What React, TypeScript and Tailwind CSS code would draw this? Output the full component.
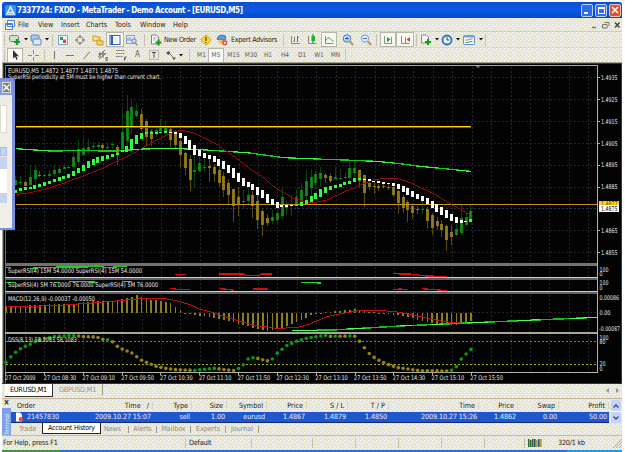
import type { ReactNode } from 'react'

const DITHER =
    "bg-[#e6e5d8] bg-[image:radial-gradient(circle_at_2.5px_2.5px,#ffff9c_0.7px,transparent_0.8px),radial-gradient(circle_at_0.5px_0.5px,#fff_0.7px,transparent_0.8px),radial-gradient(circle_at_2.5px_2.5px,#fff_0.7px,transparent_0.8px)] bg-[size:12px_8px,4px_4px,4px_4px]"

const STEP = 14.53
const barX = (i: number) => 47 + i * STEP

// [up, high, body top, body bottom, low]
const candles = [
    [1, 341, 355, 368, 372], [1, 341, 360, 363, 370], [0, 358, 360, 371, 373], [1, 310, 345, 368, 375],
    [1, 310, 325, 352, 370], [0, 328, 339, 341, 345], [1, 335, 339, 341, 345], [1, 325, 336, 341, 345],
    [1, 310, 325, 336, 345], [1, 308, 320, 332, 335], [1, 310, 315, 322, 325], [1, 310, 314, 319, 322],
    [1, 268, 285, 316, 322], [1, 235, 260, 300, 312], [1, 228, 258, 278, 283], [1, 231, 254, 265, 275],
    [1, 240, 251, 256, 262], [1, 240, 250, 255, 262], [0, 242, 250, 259, 264], [1, 240, 255, 257, 262],
    [1, 240, 245, 250, 262], [0, 250, 254, 273, 308], [1, 140, 210, 262, 272], [1, 98, 148, 238, 265],
    [1, 110, 135, 191, 215], [1, 122, 147, 162, 165], [0, 140, 157, 200, 208], [0, 172, 178, 225, 250],
    [0, 200, 207, 232, 252], [1, 198, 205, 215, 225], [1, 170, 192, 208, 215], [1, 178, 198, 208, 212],
    [0, 195, 200, 234, 256], [0, 205, 212, 248, 258], [0, 222, 236, 280, 316], [0, 270, 272, 318, 340],
    [0, 280, 292, 353, 388], [1, 280, 323, 331, 378], [1, 282, 304, 328, 330], [1, 278, 314, 317, 328],
    [0, 288, 313, 319, 360], [0, 305, 315, 336, 360], [0, 312, 323, 362, 375], [0, 330, 341, 385, 405],
    [0, 350, 363, 398, 425], [0, 380, 380, 432, 480], [0, 375, 405, 430, 462], [1, 385, 417, 420, 440],
    [1, 378, 398, 417, 425], [0, 388, 400, 432, 468], [0, 400, 417, 475, 500], [0, 440, 447, 490, 522],
    [0, 455, 467, 484, 492], [1, 445, 464, 478, 485], [1, 440, 452, 473, 482], [1, 378, 405, 462, 470],
    [1, 418, 428, 438, 460], [1, 400, 428, 432, 462], [1, 380, 405, 430, 433], [1, 362, 383, 425, 432],
    [1, 325, 356, 402, 425], [1, 322, 345, 378, 412], [1, 327, 336, 364, 382], [1, 315, 332, 352, 375],
    [0, 334, 339, 347, 362], [0, 334, 343, 358, 362], [1, 315, 346, 350, 355], [1, 322, 347, 350, 352],
    [1, 330, 345, 349, 352], [1, 300, 318, 347, 360], [1, 298, 317, 332, 345], [0, 323, 325, 356, 376],
    [0, 338, 340, 393, 436], [0, 355, 363, 376, 383], [0, 358, 371, 376, 395], [0, 365, 373, 377, 386],
    [0, 360, 373, 376, 380], [0, 366, 374, 378, 384], [0, 370, 376, 398, 405], [0, 385, 388, 424, 455],
    [0, 400, 405, 437, 452], [0, 415, 420, 444, 480], [0, 425, 432, 454, 470], [0, 432, 440, 444, 455],
    [1, 418, 440, 443, 455], [0, 435, 440, 476, 500], [0, 452, 458, 498, 518], [0, 465, 477, 492, 505],
    [0, 475, 485, 505, 525], [0, 488, 493, 533, 567], [0, 490, 511, 525, 548], [1, 485, 502, 518, 522],
    [1, 430, 468, 512, 518], [1, 450, 465, 490, 495], [1, 428, 447, 480, 480],
]

// [centre, height] of the smoothed bars
const smooth = [
    [389, 10], [384, 9], [381, 9], [378, 7], [375, 10], [370, 10], [366, 10], [361, 10], [356, 10], [351, 10],
    [346, 9], [342, 12], [336, 15], [326, 17], [318, 19], [308, 19], [299, 18], [294, 17], [290, 14], [285, 12],
    [280, 9], [275, 6], [268, 6], [260, 18], [246, 28], [232, 28], [222, 20], [214, 6], [214, 5], [213, 5],
    [212, 5], [210, 5], [211, 4], [214, 7], [221, 17], [234, 25], [249, 30], [264, 28], [274, 18], [280, 16],
    [285, 14], [291, 18], [301, 22], [309, 22], [321, 25], [333, 28], [346, 28], [359, 24], [368, 16], [375, 18],
    [386, 24], [396, 26], [410, 28], [420, 20], [429, 16], [432, 6], [432, 5], [431, 3], [430, 4], [426, 10],
    [420, 14], [411, 18], [402, 20], [393, 22], [384, 16], [379, 13], [374, 9], [370, 9], [366, 9], [361, 10],
    [355, 12], [351, 7], [352, 4], [355, 6], [359, 5], [361, 5], [364, 5], [365, 5], [369, 9], [374, 14],
    [381, 16], [388, 20], [397, 19], [404, 17], [410, 14], [418, 19], [428, 22], [438, 23], [447, 24], [456, 24],
    [467, 22], [474, 18], [478, 10], [478, 4], [475, 8],
]

const macd = [
    [17, 172], [90, 166], [180, 162], [220, 161], [265, 155], [352, 151], [380, 145], [410, 136], [425, 142],
    [454, 150], [483, 152], [512, 160], [541, 181], [556, 188], [570, 191], [599, 198], [630, 200], [660, 209],
    [700, 216], [740, 228], [775, 238], [800, 242], [830, 238], [850, 233], [875, 222], [900, 212], [930, 198],
    [950, 189], [990, 186], [1005, 183], [1035, 181], [1065, 177], [1080, 182], [1110, 186], [1160, 189], [1180, 194],
    [1210, 199], [1250, 208], [1280, 216], [1320, 222], [1350, 227], [1380, 222], [1413, 213],
]

const dss = [
    [17, 338], [30, 323], [45, 308], [60, 297], [75, 289], [90, 283], [105, 275], [134, 266], [163, 260],
    [207, 257], [230, 257], [250, 260], [290, 261], [308, 268], [322, 269], [337, 275], [352, 289], [366, 297],
    [381, 303], [396, 309], [410, 320], [425, 331], [454, 343], [468, 349], [497, 355], [526, 359], [585, 361],
    [640, 355], [660, 357], [700, 362], [715, 356], [730, 344], [744, 327], [758, 323], [773, 325], [800, 333],
    [817, 327], [831, 310], [846, 298], [860, 287], [889, 274], [919, 265], [950, 260], [975, 256], [990, 259],
    [1063, 258], [1078, 273], [1093, 293], [1107, 310], [1122, 322], [1137, 331], [1166, 344], [1195, 353],
    [1230, 358], [1260, 362], [1340, 363], [1355, 361], [1368, 352], [1382, 329], [1397, 313], [1413, 298],
]

const at = (pts: number[][], x: number) => {
    const k = pts.findIndex((p) => p[0] >= x)
    if (k < 0) return pts[pts.length - 1][1]
    if (k === 0) return pts[0][1]
    const [a, b] = [pts[k - 1], pts[k]]
    return a[1] + ((b[1] - a[1]) * (x - a[0])) / (b[0] - a[0])
}

const dssUp = (x: number) =>
    x < 228 || (x > 315 && x < 330) || (x > 577 && x < 648) || (x > 708 && x < 766) || (x > 810 && x < 982) ||
    (x > 999 && x < 1012) || (x > 1043 && x < 1056) || x > 1348

const indicatorBars = Array.from({ length: 97 }, (_, i) => barX(i - 2))
const gridX = Array.from({ length: 30 }, (_, i) => 25 + i * 19.42)
const prices = ['1.4935', '1.4925', '1.4915', '1.4905', '1.4895', '1.4885', '', '1.4865', '1.4855']
const times = ['2009', '08:30', '09:10', '09:50', '10:30', '11:10', '11:50', '12:30', '13:10', '13:50', '14:30', '15:10', '15:50']

const Label = ({ x, y, w, children, fill = '#e4e4e4' }: { x: number; y: number; w: number; children: string; fill?: string }) => (
    <text x={x} y={y} textLength={w} lengthAdjust="spacingAndGlyphs" fill={fill}>{children}</text>
)

const Chart = () => (
    <svg
        className="block w-[620px] h-[321px] shrink-0 overflow-visible whitespace-pre font-['DejaVu_Sans_Condensed','DejaVu_Sans',sans-serif] text-[6.4px]"
        viewBox="2 62 620 321"
        shapeRendering="crispEdges"
    >
        <rect x="2" y="62" width="620" height="321" fill="#a5a596" />
        <rect x="3" y="63" width="619" height="320" fill="#3a3a36" />
        <rect x="4" y="64" width="617" height="319" fill="#040304" />
        <path d="M5 65.5H597.5" stroke="#a8a8a0" />
        <path d="M5.5 65V383" stroke="#6b6b68" />

        <g strokeWidth="1" strokeDasharray="2 2">
            {gridX.map((x) => <path key={x} d={`M${Math.round(x) + 0.5} 67V372`} stroke="#22262f" />)}
            {prices.map((_, i) => <path key={i} d={`M6 ${Math.round(77 + i * 21.9) + 0.5}H597`} stroke="#1c2330" />)}
            <path d="M6 208.5H597" stroke="#23364f" />
            <path d="M6 312.5H597" stroke="#24241c" />
        </g>

        <g transform="translate(0 62) scale(.33333)" fill="none">
            {candles.map(([up, high, top, bottom, low], i) => (
                <g key={i} fill={up ? '#0b7d12' : '#8a7411'}>
                    <rect x={barX(i) - 1.5} y={high} width="3" height={low - high} fill={up ? '#07450b' : '#584b0b'} />
                    <rect x={barX(i) - 4.5} y={top} width="9" height={Math.max(3, bottom - top)} />
                    <path d={`M${barX(i)} ${top}V${bottom}`} stroke={up ? '#119c1b' : '#9b821b'} strokeWidth="3" strokeDasharray="3 3" />
                </g>
            ))}
            <path d="M47 193H1413" stroke="#ffd400" strokeWidth="4" />
            <path d="M47 196.5H1413" stroke="#6e6200" strokeWidth="3" />
            <path d="M47 427H1791" stroke="#c79325" strokeWidth="3" />
            <path
                d="M47 260 150 267 230 266 350 267 430 261 520 259 600 263 650 266 750 273 850 287 950 291 1060 295 1130 298 1200 305 1260 313 1413 328"
                stroke="#12c91c" strokeWidth="4"
            />
            <path
                d="M47 260 150 267M390 263 430 261 520 259 600 263 640 265M700 269 750 273M850 287 950 291M1100 297 1180 302M1250 312 1310 318M1370 325 1413 328"
                stroke="#3cf545" strokeWidth="3"
            />
            <path
                d="M47 398 90 392 134 382 190 364 250 342 300 322 350 297 390 280 430 256 480 230 520 210 545 205 580 212 600 222 650 247 700 282 750 320 790 347 830 380 880 408 920 420 940 422 980 414 1030 391 1080 370 1120 353 1160 349 1190 349 1230 362 1300 395 1350 425 1410 458"
                stroke="#9b0a0a" strokeWidth="3"
            />
            {smooth.map(([c, h], i) => (
                <rect
                    key={i} x={barX(i) - 4.8} y={c - h / 2} width="9" height={Math.max(h, 3)}
                    fill={i < 32 || (i > 57 && i < 72) || i === 94 ? '#2dff3a' : '#ffffff'}
                />
            ))}
            <path d="M1427 12H1441L1434 19Z" fill="#59616d" />
        </g>

        <rect x="5" y="263" width="593" height="3" fill="#727272" />
        <rect x="5" y="277" width="593" height="1" fill="#d0d0c8" />
        <rect x="5" y="278" width="593" height="2" fill="#5b6064" />
        <rect x="5" y="291" width="593" height="1" fill="#d0d0c8" />
        <rect x="5" y="292" width="593" height="2" fill="#5b6064" />
        <rect x="5" y="332" width="593" height="2" fill="#aaa89a" />
        <path d="M5 372.5H598M597.5 65V373" stroke="#b4b2a6" fill="none" />

        <g transform="translate(0 250) scale(.33333)" fill="none" strokeWidth="4">
            {indicatorBars.map((x) => {
                const y = at(macd, x)
                return <rect key={x} x={x - 2.5} y={Math.min(188, y)} width="5" height={Math.max(3, Math.abs(y - 188))} fill="#8d7f1d" />
            })}
            <path
                d="M17 170 100 169 200 165 300 157 360 152 430 145 490 145 520 150 570 164 600 178 640 188 700 208 760 225 830 235 890 233 930 222 980 200 1020 192 1070 183 1120 181 1180 184 1220 191 1280 203 1330 215 1370 218 1413 222"
                stroke="#c40f12" strokeWidth="3"
            />
            <path d="M875 242 1000 240 1200 228 1400 219 1791 202" stroke="#12bd1b" strokeWidth="4.5" />
            <path d="M875 242 955 241M1045 237 1095 234M1200 228 1235 227M1290 224 1330 222M1400 219 1465 216M1550 212 1620 209M1710 206 1791 202" stroke="#4dff55" strokeWidth="3" />
            <path d="M17 276H1791" stroke="#7f8a16" strokeWidth="3" strokeDasharray="7 5" />
            <path d="M17 343H1791" stroke="#a3b015" strokeWidth="3" strokeDasharray="7 5" />
            <g shapeRendering="auto">
                {indicatorBars.map((x) => (
                    <circle key={x} cx={x} cy={at(dss, x)} r="5.4" fill={dssUp(x) ? '#0b9a17' : '#95821a'} />
                ))}
            </g>
            <path d="M17 53H33M90 55 140 52 200 51 260 51 290 48 320 53 382 48" stroke="#18cf22" />
            <path d="M17 97H47M162 97H178M207 94H235L295 97M365 95 396 94M903 97 940 98 962 99" stroke="#1fd52a" />
            <path d="M526 73H557M658 72H730L740 77H775L785 72H817M1180 71 1250 73 1262 77 1340 80" stroke="#e00b0b" />
            <path d="M510 115 540 119H570M657 116 685 118 702 121M760 117H805M1180 119 1200 117 1223 119M1267 116 1340 122" stroke="#d00b0b" />
        </g>

        <Label x={8} y={72.6} w={110}>EURUSD,M5  1.4872 1.4877 1.4871 1.4875</Label>
        <Label x={8} y={79} w={153}>SuperRSI periodicity at 5M must be higher than current chart.</Label>
        <Label x={8} y={273.4} w={134}>SuperRSI(4) 15M 54.0000   SuperRSI(4) 15M 54.0000</Label>
        <Label x={8} y={287.3} w={150}>SuperRSI(4) 5M 76.0000 76.0000   SuperRSI(4) 5M 76.0000</Label>
        <Label x={8} y={301.4} w={87}>MACD(12,26,9) -0.00037 -0.00050</Label>
        <Label x={8} y={342} w={69}>DSS(8,13) 58.1083 58.1083</Label>

        {times.map((t, i) => (
            <g key={t}>
                <path d={`M${Math.round(5 + i * 38.84) + 0.5} 373V375`} stroke="#b4b2a6" />
                <Label x={5 + i * 38.78} y={380.2} w={i ? 32.5 : 30.5}>{`27 Oct ${t}`}</Label>
            </g>
        ))}
        {prices.map((p, i) => p && (
            <g key={p}>
                <path d={`M598 ${Math.round(77 + i * 21.9) + 0.5}H599.5`} stroke="#b4b2a6" />
                <Label x={601} y={79.8 + i * 21.9} w={16.5}>{p}</Label>
            </g>
        ))}
        <rect x="599" y="201" width="20" height="5" fill="#ffd21c" />
        <Label x={601} y={206} w={16.5} fill="#5a4500">1.4877</Label>
        <rect x="599" y="205" width="20" height="7" fill="#fff" />
        <Label x={601} y={210.9} w={16.5} fill="#111">1.4875</Label>
        <Label x={599.5} y={271.6} w={9}>100</Label>
        <Label x={599.5} y={276.4} w={3}>0</Label>
        <Label x={599.5} y={285.4} w={9}>100</Label>
        <Label x={599.5} y={290.2} w={3}>0</Label>
        <Label x={599.5} y={299.8} w={19.5}>0.00086</Label>
        <Label x={599.5} y={314.8} w={11}>0.00</Label>
        <Label x={599} y={330.6} w={21}>-0.00087</Label>
        <Label x={599.5} y={339.6} w={9}>100</Label>
        <Label x={599.5} y={344.4} w={6}>80</Label>
        <Label x={599.5} y={366} w={6}>20</Label>
        <Label x={599.5} y={370.8} w={3}>0</Label>
    </svg>
)

const Icon = ({ children }: { children: ReactNode }) => (
    <svg viewBox="0 0 12 12" className="w-3 h-3 shrink-0" fill="none">{children}</svg>
)

const Cell = ({ w, on, children }: { w: string; on?: boolean; children?: ReactNode }) => (
    <div className={`${w} h-[15px] shrink-0 flex items-center justify-center whitespace-nowrap ${on ? 'bg-[#f8f8f3] border border-[#b9b7aa]' : ''}`}>
        {children}
    </div>
)

const Sep = ({ w }: { w: string }) => (
    <div className={`${w} shrink-0 flex justify-center`}><div className="w-px h-3 bg-[#c9c3ae]" /></div>
)

const Arrow = ({ w }: { w: string }) => (
    <div className={`${w} shrink-0 flex justify-center`}>
        <svg viewBox="0 0 4 3" className="w-1 h-[3px]"><path d="M0 0H4L2 2.6Z" fill="#111" /></svg>
    </div>
)

const Plus = ({ x, y }: { x: number; y: number }) => (
    <path d={`M${x} ${y - 3}V${y + 3}M${x - 3} ${y}H${x + 3}`} stroke="#1b9a24" strokeWidth="2.2" />
)

const MainToolbar = () => (
    <div className="h-4 flex items-center border-t border-[#cfccbb]">
        <Sep w="w-[5px]" />
        <Cell w="w-4"><Icon><rect x="0.5" y="1.5" width="9" height="6" rx="1" fill="#cfe0cf" stroke="#6f8f7c" /><Plus x={8} y={8} /></Icon></Cell>
        <Arrow w="w-[5px]" />
        <Cell w="w-4"><Icon><rect x="1" y="1" width="8" height="6" rx="1" fill="#a9c9ee" stroke="#5f87b8" /><rect x="3" y="5" width="8" height="6" rx="1" fill="#dbe8f5" stroke="#5f87b8" /></Icon></Cell>
        <Arrow w="w-[5px]" />
        <Sep w="w-[7px]" />
        <Cell w="w-3.5"><Icon><rect x="1.5" y="1.5" width="9" height="9" fill="#eef6fb" stroke="#7fa6c8" /><path d="M3 3H6V6H3Z" fill="#25a43a" /><path d="M6 5.5H9V9H6Z" fill="#e0462c" /></Icon></Cell>
        <Cell w="w-5"><Icon><circle cx="6" cy="6" r="3.3" stroke="#8d8b80" /><path d="M6 1V4M6 8V11M1 6H4M8 6H11" stroke="#6a685e" /></Icon></Cell>
        <Cell w="w-4"><Icon><path d="M1 2H4L5 3H8V7H1Z" fill="#ffe27a" stroke="#c79a24" /><path d="M5 6H7L8 7H11V11H5Z" fill="#ffd34e" stroke="#c79a24" /></Icon></Cell>
        <Cell w="w-[18px]" on><Icon><rect x="1" y="1.5" width="10" height="9" fill="#fff" stroke="#2c62b8" /><path d="M3 1V11" stroke="#2c62b8" strokeWidth="2" /><path d="M6 4H9M6 6H9M6 8H9" stroke="#d3d9e6" /></Icon></Cell>
        <Cell w="w-4"><Icon><rect x="0.5" y="1.5" width="8" height="8" fill="#e2ebf3" stroke="#8ea6bd" /><path d="M2 7V4M4 7V3M6 7V5" stroke="#6a8db2" /><circle cx="8" cy="7" r="2.2" fill="#cfe3f6" stroke="#5e86b5" /><path d="M9.5 9 11.5 11.5" stroke="#c39a3a" strokeWidth="1.5" /></Icon></Cell>
        <Sep w="w-2" />
        <Cell w="w-4"><Icon><path d="M1.5 1H6.5L8.5 3V10H1.5Z" fill="#fff" stroke="#77837a" /><path d="M3 4H7M3 6H6" stroke="#9aa39c" /><Plus x={8.5} y={8.5} /></Icon></Cell>
        <div className="w-[34px] shrink-0 whitespace-nowrap tracking-[-0.3px]">New Order</div>
        <Cell w="w-[15px]"><Icon><path d="M6 0.7 11.3 6 6 11.3 0.7 6Z" fill="#ffd735" stroke="#cf9a12" /><path d="M6 3V7M6 8V9" stroke="#4f3a00" strokeWidth="1.2" /></Icon></Cell>
        <Cell w="w-[18px]"><Icon><path d="M1 5Q2 1 6 1T10 4L9 6H2Z" fill="#5b9fdb" stroke="#3c77b5" /><path d="M2 6H7V9Q4 11 2 8Z" fill="#efc56a" /><circle cx="8.7" cy="8.7" r="2.6" fill="#e34f2c" /><rect x="7.8" y="7.8" width="2" height="2" fill="#fff" /></Icon></Cell>
        <div className="w-[49px] shrink-0 whitespace-nowrap tracking-[-0.3px]">Expert Advisors</div>
        <Sep w="w-[7px]" />
        <Cell w="w-4"><Icon><path d="M2.5 2V9.5H10.5M5.5 3V8M5.5 7H4M8.5 3H10" stroke="#7c8f7e" /><path d="M8.5 2V8" stroke="#219e32" /></Icon></Cell>
        <Cell w="w-[18px]"><Icon><path d="M2.5 2V9.5H10.5" stroke="#7c8f7e" /><path d="M7 0V9" stroke="#167a22" /><rect x="5.5" y="2" width="3.5" height="5" fill="#23b135" /></Icon></Cell>
        <Cell w="w-4" on><Icon><path d="M2.5 2V9.5H10.5" stroke="#7c8f7e" /><path d="M2.5 7Q5 2 7 4.5T10.5 7" stroke="#38a548" /></Icon></Cell>
        <Cell w="w-[22px]"><Icon><circle cx="5" cy="4.5" r="3.7" fill="#d5e8fa" stroke="#3474bd" /><path d="M3 4.5H7M5 2.5V6.5" stroke="#1f5fae" /><path d="M8 7.5 11 11" stroke="#c7982f" strokeWidth="2" /></Icon></Cell>
        <Cell w="w-3.5"><Icon><circle cx="5" cy="4.5" r="3.7" fill="#dcebf9" stroke="#6f9fcf" /><path d="M3 4.5H7" stroke="#3a72b5" /><path d="M8 7.5 11 11" stroke="#c7982f" strokeWidth="2" /></Icon></Cell>
        <Sep w="w-[7px]" />
        <Cell w="w-4" on><Icon><path d="M2.5 2V9.5H10.5M9.5 3V9" stroke="#8b9489" /><path d="M5 3 8.5 5.5 5 8Z" fill="#1c9c2c" /></Icon></Cell>
        <Cell w="w-[18px]" on><Icon><path d="M2.5 2V9.5H10.5M6.5 3V9" stroke="#7d90a5" /><path d="M11 3 7.5 5.5 11 8Z" fill="#d9432b" /></Icon></Cell>
        <Sep w="w-1" />
        <Cell w="w-4"><Icon><path d="M1.5 1H6.5L8.5 3V9H1.5Z" fill="#f5f5ef" stroke="#8a8f87" /><Plus x={8} y={8} /></Icon></Cell>
        <Arrow w="w-[5px]" />
        <Cell w="w-4"><Icon><circle cx="6" cy="6" r="4.5" fill="#eaf3fd" stroke="#2f6fc4" strokeWidth="1.8" /><path d="M6 3V6H8.2" stroke="#345" /></Icon></Cell>
        <Arrow w="w-[5px]" />
        <Cell w="w-[18px]"><Icon><rect x="0.5" y="1.5" width="11" height="9" rx="1" fill="#f3f8fc" stroke="#5f93c8" /><path d="M1 2.5H11" stroke="#6ea6de" strokeWidth="2" /><path d="M2.5 6H5L7 5H9.5" stroke="#d56a4a" /><path d="M2.5 8.5H5L7 7.5H9.5" stroke="#4aa55a" /></Icon></Cell>
        <Arrow w="w-[5px]" />
        <Sep w="w-1" />
    </div>
)

const LineToolbar = () => (
    <div className="h-[15px] flex items-center text-[#5c5a52] text-[6.5px] border-t border-[#dad7c8]">
        <Sep w="w-[5px]" />
        <Cell w="w-4" on><Icon><path d="M4 1V9.5L6 7.7 7.5 11 8.7 10.3 7.3 7.2H10Z" fill="#333" /></Icon></Cell>
        <Cell w="w-5"><Icon><path d="M6.5 1V5M6.5 8V12M1 6.5H5M8 6.5H12" stroke="#8b897f" /></Icon></Cell>
        <Sep w="w-[2px]" />
        <Cell w="w-[17px]"><Icon><path d="M6.5 2V10" stroke="#77756b" /></Icon></Cell>
        <Cell w="w-4"><Icon><path d="M2 6.5H10" stroke="#77756b" /></Icon></Cell>
        <Cell w="w-[17px]"><Icon><path d="M2.5 10 9 2.5" stroke="#77756b" /></Icon></Cell>
        <Cell w="w-4"><Icon><path d="M1 8 8 1M2 10 9 4M1 5H9M3 3V9M6 2V9M9 8.5H11M9 8.5V11.5H11M9 10H11" stroke="#605e55" strokeWidth=".8" /></Icon></Cell>
        <Cell w="w-[19px]"><Icon><path d="M1 1.5H10M1 4.5H10M1 7.5H8" stroke="#77756b" strokeDasharray="1.5 .7" /><path d="M9.5 11.5V8H11.5M9.5 9.8H11" stroke="#605e55" /></Icon></Cell>
        <Cell w="w-[15px]"><span className="text-[8px]">A</span></Cell>
        <Cell w="w-[18px]"><Icon><rect x="1.5" y="1.5" width="9" height="9" stroke="#8a887e" strokeDasharray="1 1" /><path d="M4 3.5H8M6 3.5V9" stroke="#55534b" /></Icon></Cell>
        <Cell w="w-[15px]"><Icon><path d="M1 4 3.5 2 5.5 4 3.5 6Z" fill="#55534b" /><path d="M5 5 8 8" stroke="#77756b" /><path d="M7 8.5H11L9 11Z" fill="#4a4942" /></Icon></Cell>
        <Arrow w="w-[5px]" />
        <Sep w="w-3" />
        <Cell w="w-[13px]">M1</Cell>
        <Cell w="w-4" on>M5</Cell>
        <Cell w="w-[19px]">M15</Cell>
        <Cell w="w-4">M30</Cell>
        <Cell w="w-[18px]">H1</Cell>
        <Cell w="w-4">H4</Cell>
        <Cell w="w-[18px]">D1</Cell>
        <Cell w="w-4">W1</Cell>
        <Cell w="w-[17px]">MN</Cell>
        <Sep w="w-[2px]" />
    </div>
)

const TitleBar = () => (
    <div className="h-4 flex items-center bg-gradient-to-b from-[#0a4fd0] via-[#0d59e4] to-[#0748c4] pl-[3px] pr-px rounded-t-[3px]">
        <svg viewBox="0 0 12 12" className="w-[11px] h-[11px]">
            <rect width="12" height="12" rx="2" fill="#3c93e6" />
            <path d="M2 10 6 2 10 10ZM4 8H8" fill="none" stroke="#e9f5ff" strokeWidth="1.5" />
        </svg>
        <div className="pl-px text-white font-bold text-[8px] flex-1">
            <svg className="block w-[300px] h-3 overflow-visible" viewBox="0 0 300 12">
                <text x="0" y="9" textLength="226" fill="#fff">7337724: FXDD - MetaTrader - Demo Account - [EURUSD,M5]</text>
            </svg>
        </div>
        <div className="flex gap-[2px]">
            <div className="w-3 h-[13px] rounded-[2px] border border-[#b9d0f8] bg-[#2f6bea] flex items-end pl-[2px] pb-[2px]"><div className="w-1 h-[2px] bg-white" /></div>
            <div className="w-3 h-[13px] rounded-[2px] border border-[#b9d0f8] bg-[#2f6bea] flex items-center justify-center"><div className="w-[7px] h-[7px] border border-t-2 border-white" /></div>
            <div className="w-3 h-[13px] rounded-[2px] border border-[#f1c5b8] bg-[#e0532c] flex items-center justify-center">
                <svg viewBox="0 0 8 8" className="w-2 h-2"><path d="M1 1 7 7M7 1 1 7" stroke="#fff" strokeWidth="1.6" /></svg>
            </div>
        </div>
    </div>
)

const MenuBar = () => (
    <div className="h-[13px] flex items-center pl-[3px] pr-px">
        <svg viewBox="0 0 10 10" className="w-[10px] h-[10px]"><path d="M2.5.5H9.5V6.5H2.5ZM.5 3.5H7.5V9.5H.5Z" fill="#eef5ff" stroke="#4a83cf" /><path d="M1 4.5H7" stroke="#4a83cf" /></svg>
        <div className="w-[3px]" />
        <div className="w-5">File</div>
        <div className="w-[23px]">View</div>
        <div className="w-[25px]">Insert</div>
        <div className="w-[29px]">Charts</div>
        <div className="w-[25px]">Tools</div>
        <div className="w-[33px]">Window</div>
        <div className="flex-1">Help</div>
        <svg viewBox="0 0 30 8" className="w-[30px] h-2" fill="none" stroke="#77766c">
            <path d="M1 6.5H5" strokeWidth="1.4" />
            <path d="M13.5 1.5H18V5M11.5 3.5H16V7H11.5Z" />
            <path d="M24 1.5 28.5 6.5M28.5 1.5 24 6.5" stroke="#44433c" strokeWidth="1.4" />
        </svg>
    </div>
)

const columns = ['Order', 'Time   /', 'Type', 'Size', 'Symbol', 'Price', 'S / L', 'T / P', 'Time', 'Price', 'Swap', 'Profit']
const trade = ['21457830', '2009.10.27 15:07', 'sell', '1.00', 'eurusd', '1.4867', '1.4879', '1.4850', '2009.10.27 15:26', '1.4862', '0.00', '50.00']
const COLS = 'grid grid-cols-[69px_73px_39px_35px_40px_40px_41px_41px_90px_39px_41px_50px] items-center'

const Terminal = () => (
    <div className="h-[37px] flex border-t border-[#c4b79c]">
        <div className="w-[9px] shrink-0 flex flex-col items-center">
            <div className="h-[9px] leading-[8px] text-[8px] font-bold">×</div>
            <div className="w-[9px] h-[27px] bg-[#7ba2e6] text-[#dce8ff] text-[6px] leading-[9px] whitespace-nowrap tracking-[-0.2px] [writing-mode:vertical-rl] rotate-180">Terminal</div>
        </div>
        <div className="w-[598px] shrink-0">
            <div className={`${COLS} h-[13px]`}>
                {columns.map((c, i) => (
                    <div key={i} className={`whitespace-pre ${i ? 'text-right pr-[3px] border-r border-[#d8d3c2]' : 'pl-[6px]'}`}>{c}</div>
                ))}
            </div>
            <div className={`${COLS} h-[11px] bg-[#1f58cd] border-b border-[#102a78] text-[#e3ecff]`}>
                {trade.map((t, i) => (
                    <div key={i} className={`whitespace-nowrap tracking-[-0.1px] ${i ? 'text-right pr-[2px]' : 'flex items-center pl-[3px] gap-[3px]'}`}>
                        {i === 0 && <svg viewBox="0 0 10 10" className="w-[10px] h-[10px]"><path d="M2 .5H6L8 2.5V9.5H2Z" fill="#fff" /><circle cx="7" cy="7.3" r="2.2" fill="#e1502c" /></svg>}
                        {t}
                    </div>
                ))}
            </div>
            <div className="h-3 flex items-center text-[#8c8a7e] text-[7px]">
                <div className="w-[31px] pl-[2px] text-center">Trade</div>
                <div className="w-[59px] h-[11px] -mt-px flex items-center justify-center whitespace-nowrap bg-white text-black border border-t-0 border-[#222] tracking-[-0.2px]">Account History</div>
                <div className="w-[28px] pr-1 text-center border-r border-[#9f9d90] leading-[7px]">News</div>
                <div className="w-7 text-center border-r border-[#9f9d90] leading-[7px]">Alerts</div>
                <div className="w-[34px] text-center border-r border-[#9f9d90] leading-[7px]">Mailbox</div>
                <div className="w-[35px] text-center border-r border-[#9f9d90] leading-[7px]">Experts</div>
                <div className="w-[33px] text-center border-r border-[#9f9d90] leading-[7px]">Journal</div>
            </div>
        </div>
        <div className="w-[10px] h-6 flex flex-col mt-px ml-[2px]">
            <div className="h-[11px] rounded-[2px] bg-[#c3d3fb] flex items-center justify-center"><svg viewBox="0 0 6 4" className="w-[6px] h-1"><path d="M.5 3.5 3 1 5.5 3.5" fill="none" stroke="#334a80" strokeWidth="1.4" /></svg></div>
            <div className="h-px bg-white" />
            <div className="h-[11px] rounded-[2px] bg-[#c3d3fb] flex items-center justify-center"><svg viewBox="0 0 6 4" className="w-[6px] h-1"><path d="M.5 .5 3 3 5.5 .5" fill="none" stroke="#334a80" strokeWidth="1.4" /></svg></div>
        </div>
    </div>
)

const StatusBar = () => (
    <div className="h-[15px] flex items-center border-t border-[#c4b79c] tracking-[-0.2px]">
        <div className="w-[184px] pl-px border-r border-[#cdbfa3] leading-[10px]">For Help, press F1</div>
        <div className="w-[66px] pl-[3px] border-r border-[#cdbfa3] leading-[10px]">Default</div>
        <div className="w-[61px] h-[10px] border-r border-[#cdbfa3]" />
        <div className="w-[43px] h-[10px] border-r border-[#cdbfa3]" />
        <div className="w-[43px] h-[10px] border-r border-[#cdbfa3]" />
        <div className="w-[43px] h-[10px] border-r border-[#cdbfa3]" />
        <div className="w-[43px] h-[10px] border-r border-[#cdbfa3]" />
        <div className="w-[40px] h-[10px] border-r border-[#cdbfa3]" />
        <svg viewBox="0 0 14 8" className="w-[14px] h-2 ml-[3px]">
            {[0, 2, 4, 6, 8, 10, 12].map((x, i) => (
                <rect key={x} x={x} y={i % 3 === 1 ? 1 : 0} width="1.6" height="8" fill={i < 3 ? '#2f6b38' : i % 2 ? '#23507c' : '#a89c2c'} />
            ))}
        </svg>
        <div className="w-[59px] text-center">320/1 kb</div>
        <div className="flex-1 flex justify-end">
            <svg viewBox="0 0 9 9" className="w-[9px] h-[9px]"><path d="M0 9 9 0M3 9 9 3M6 9 9 6" stroke="#b3af9f" /></svg>
        </div>
    </div>
)

// docked window sticking out over the left edge of the chart
const SidePanel = () => (
    <div className="absolute left-0 top-[78px] w-[15px] h-[152px] rounded-tr-[4px] border-t-[3px] border-r-[3px] border-b-2 border-[#7b90df] bg-[#f0efe6] overflow-hidden">
        <div className="h-[14px] bg-[#8599e2] pl-[2px] pt-px">
            <div className="w-[9px] h-[11px] bg-[#7d7d78] border border-[#dcdcd8] flex items-center justify-center">
                <svg viewBox="0 0 6 6" className="w-[7px] h-[7px]"><path d="M.5 .5 5.5 5.5M5.5 .5 .5 5.5" stroke="#fff" strokeWidth="1.3" /></svg>
            </div>
        </div>
        <div className="h-[10px] bg-[#eeede3]" />
        <div className="w-[7px] h-[28px] bg-white border border-[#dfddd0]" />
        <div className="h-[14px]" />
        <div className="w-[7px] h-[9px] bg-[#c6d4f2] border border-[#a9bdea]" />
        <div className="w-[7px] h-3 mt-px bg-[#c6d4f2]" />
        <div className="w-[7px] h-[24px] bg-white" />
        <div className="w-[7px] h-[10px] bg-[#c6d4f2]" />
    </div>
)

const App = () => {
    return (
        <div className="relative w-[625px] h-[452px] overflow-hidden bg-white text-[#1c1c1c] text-[7.2px] leading-none font-['DejaVu_Sans_Condensed','DejaVu_Sans',sans-serif]">
            <div className={`w-[620px] h-[450px] ml-[2px] mt-[2px] flex flex-col overflow-hidden ${DITHER}`}>
                <TitleBar />
                <MenuBar />
                <MainToolbar />
                <LineToolbar />
                <Chart />
                <div className="h-[15px] shrink-0 flex items-start border-t border-[#333] pl-[3px] text-[#99978a]">
                    <div className="w-[48px] h-[13px] flex items-center justify-center bg-white text-black border-r border-b border-[#333] tracking-[-0.2px]">EURUSD,M1</div>
                    <div className="w-[50px] h-[11px] flex items-center justify-center border-r border-[#a3a195] tracking-[-0.2px]">GBPUSD,M1</div>
                    <div className="flex-1 h-[12px] flex items-center justify-end gap-[7px] pr-[3px]">
                        <svg viewBox="0 0 3 5" className="w-[3px] h-[5px]"><path d="M3 0V5L0 2.5Z" fill="#96948a" /></svg>
                        <svg viewBox="0 0 3 5" className="w-[3px] h-[5px]"><path d="M0 0V5L3 2.5Z" fill="#96948a" /></svg>
                    </div>
                </div>
                <Terminal />
                <StatusBar />
                <div className="h-[2px] shrink-0 flex">
                    <div className="w-[58px] bg-[#3f9a3f]" />
                    <div className="flex-1 bg-[#2a6fe0]" />
                    <div className="w-[55px] bg-[#189ce8]" />
                </div>
            </div>
            <SidePanel />
        </div>
    )
}

export default App
